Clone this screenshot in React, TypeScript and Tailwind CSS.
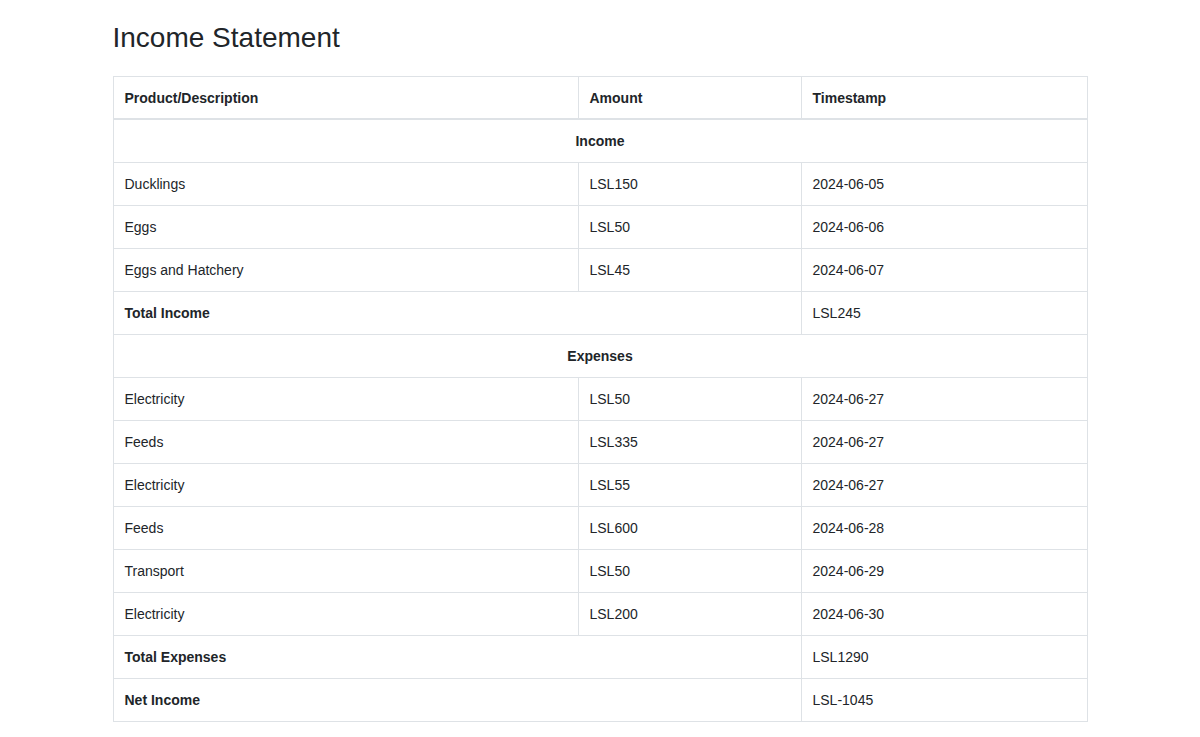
import React from "react";

type Row = { d: string; a: string; t: string };

const income: Row[] = [
  { d: "Ducklings", a: "LSL150", t: "2024-06-05" },
  { d: "Eggs", a: "LSL50", t: "2024-06-06" },
  { d: "Eggs and Hatchery", a: "LSL45", t: "2024-06-07" },
];

const expenses: Row[] = [
  { d: "Electricity", a: "LSL50", t: "2024-06-27" },
  { d: "Feeds", a: "LSL335", t: "2024-06-27" },
  { d: "Electricity", a: "LSL55", t: "2024-06-27" },
  { d: "Feeds", a: "LSL600", t: "2024-06-28" },
  { d: "Transport", a: "LSL50", t: "2024-06-29" },
  { d: "Electricity", a: "LSL200", t: "2024-06-30" },
];

const td = "border border-[#dee2e6] px-[11px] py-[11px] leading-[20px] align-top";

function DataRow({ r }: { r: Row }) {
  return (
    <tr>
      <td className={td}>{r.d}</td>
      <td className={td}>{r.a}</td>
      <td className={td}>{r.t}</td>
    </tr>
  );
}

export default function App() {
  return (
    <div
      className="bg-white min-h-screen text-[#212529]"
      style={{ fontFamily: '"Liberation Sans", Arial, Helvetica, sans-serif' }}
    >
      <div className="w-[975px] mx-auto">
        <h1 className="text-[28px] leading-[1.2] font-normal pt-[21px] mb-[21px]">
          Income Statement
        </h1>
        <table className="w-full border-collapse text-[14px] table-fixed">
          <colgroup>
            <col className="w-[465px]" />
            <col className="w-[223px]" />
            <col />
          </colgroup>
          <thead>
            <tr>
              <th className="border border-[#dee2e6] border-b-2 px-[11px] pt-[11px] pb-[10px] leading-[20px] text-left font-bold">
                Product/Description
              </th>
              <th className="border border-[#dee2e6] border-b-2 px-[11px] pt-[11px] pb-[10px] leading-[20px] text-left font-bold">
                Amount
              </th>
              <th className="border border-[#dee2e6] border-b-2 px-[11px] pt-[11px] pb-[10px] leading-[20px] text-left font-bold">
                Timestamp
              </th>
            </tr>
          </thead>
          <tbody>
            <tr>
              <td colSpan={3} className={`${td} text-center font-bold`}>
                Income
              </td>
            </tr>
            {income.map((r, i) => (
              <DataRow key={"i" + i} r={r} />
            ))}
            <tr>
              <td colSpan={2} className={`${td} font-bold`}>
                Total Income
              </td>
              <td className={td}>LSL245</td>
            </tr>
            <tr>
              <td colSpan={3} className={`${td} text-center font-bold`}>
                Expenses
              </td>
            </tr>
            {expenses.map((r, i) => (
              <DataRow key={"e" + i} r={r} />
            ))}
            <tr>
              <td colSpan={2} className={`${td} font-bold`}>
                Total Expenses
              </td>
              <td className={td}>LSL1290</td>
            </tr>
            <tr>
              <td colSpan={2} className={`${td} font-bold`}>
                Net Income
              </td>
              <td className={td}>LSL-1045</td>
            </tr>
          </tbody>
        </table>
      </div>
    </div>
  );
}
